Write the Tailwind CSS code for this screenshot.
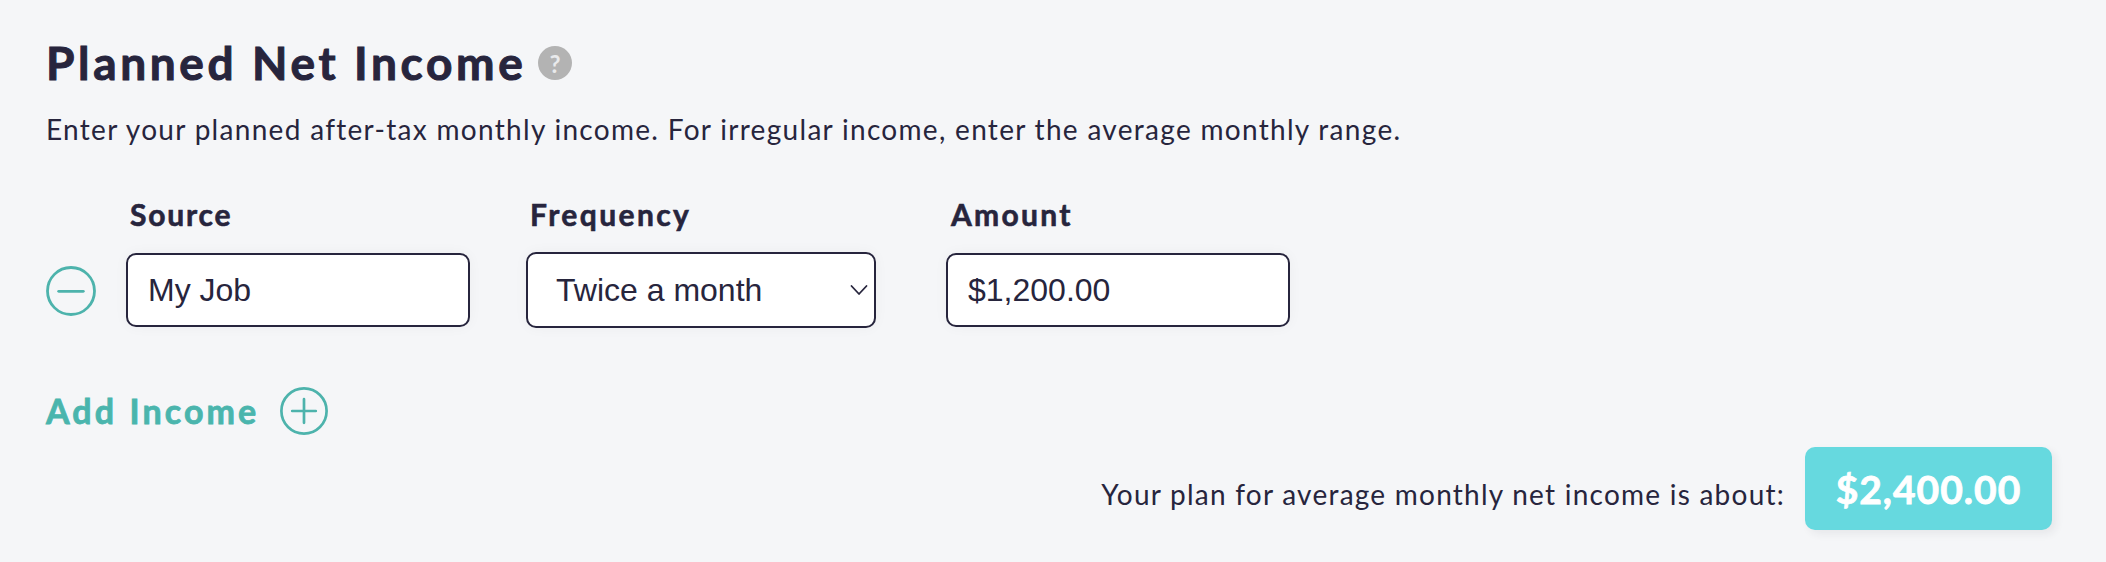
<!DOCTYPE html>
<html lang="en">
  <head>
    <meta charset="UTF-8" />
    <meta name="viewport" content="width=device-width, initial-scale=1.0" />
    <script src="https://cdn.jsdelivr.net/npm/@tailwindcss/browser@4"></script>
    <title>Planned Net Income</title>
  </head>
  <body class="bg-[#f5f6f8] text-[#27253d] font-['Lato',sans-serif]">
    <div class="h-[562px] pt-[39px] pl-[46px] pr-[54px] overflow-hidden">
      <div class="flex items-start">
        <h1 class="text-[46px] leading-[48px] font-bold tracking-[3.65px] [-webkit-text-stroke:1px_#27253d] whitespace-nowrap w-[492px]">Planned Net Income</h1>
        <button type="button" class="mt-[7px] size-[34px] rounded-full bg-[#b3b3b3] text-[#e9eaec] text-[24px] leading-[33px] font-bold text-center">?</button>
      </div>
      <p class="mt-6 text-[28px] leading-9 tracking-[1.3px] whitespace-nowrap">
        Enter your planned after-tax monthly income. For irregular income, enter the average monthly range.
      </p>

      <!-- Income row -->
      <div class="mt-[49px] flex items-start">
        <button type="button" class="mt-[70px] size-[50px]" aria-label="Remove income">
          <svg viewBox="0 0 50 50" class="size-full" fill="none" stroke="#4db3ac" stroke-width="2.8" stroke-linecap="round">
            <circle cx="25" cy="25" r="23.5" />
            <path d="M12.7 25.3H37.3" />
          </svg>
        </button>
        <div class="ml-[30px] w-[344px] flex flex-col">
          <label for="source" class="pl-1 mb-[21px] text-[30px] leading-9 font-bold tracking-[1.8px] [-webkit-text-stroke:0.6px_#27253d]">Source</label>
          <input id="source" type="text" value="My Job" class="h-[74px] rounded-[10px] border-2 border-[#27253d] bg-white px-5 text-[32px] font-['Liberation_Sans',sans-serif] shadow-[0_0_14px_rgba(39,37,61,0.04)]" />
        </div>
        <div class="ml-[56px] w-[350px] flex flex-col">
          <label for="frequency" class="pl-1 mb-5 text-[30px] leading-9 font-bold tracking-[2.4px] [-webkit-text-stroke:0.6px_#27253d]">Frequency</label>
          <div class="relative">
            <select id="frequency" class="appearance-none w-full h-[76px] rounded-[10px] border-2 border-[#27253d] bg-white px-[28px] text-[32px] font-['Liberation_Sans',sans-serif] shadow-[0_0_14px_rgba(39,37,61,0.04)]">
              <option>Twice a month</option>
            </select>
            <svg viewBox="0 0 18 12" class="absolute right-2 top-[32px] w-[18px] h-3" fill="none" stroke="#27253d" stroke-width="1.8" stroke-linecap="round" stroke-linejoin="round">
              <path d="M1.5 2L9 10L16.5 2" />
            </svg>
          </div>
        </div>
        <div class="ml-[70px] w-[344px] flex flex-col">
          <label for="amount" class="pl-[5px] mb-[21px] text-[30px] leading-9 font-bold tracking-[2.3px] [-webkit-text-stroke:0.6px_#27253d]">Amount</label>
          <input id="amount" type="text" value="$1,200.00" class="h-[74px] rounded-[10px] border-2 border-[#27253d] bg-white px-5 text-[32px] font-['Liberation_Sans',sans-serif] shadow-[0_0_14px_rgba(39,37,61,0.04)]" />
        </div>
      </div>

      <button type="button" class="mt-[59px] h-12 flex items-center text-[#4ab5ad]">
        <span class="w-[234px] text-left text-[34px] leading-[48px] font-bold tracking-[3.1px] [word-spacing:1px] [-webkit-text-stroke:0.8px_#4ab5ad] whitespace-nowrap">Add Income</span>
        <svg viewBox="0 0 48 48" class="size-12" fill="none" stroke="#4db3ac" stroke-width="2.7" stroke-linecap="round">
          <circle cx="24" cy="24" r="22.6" />
          <path d="M12.2 24H35.8M24 12.2V35.8" />
        </svg>
      </button>

      <!-- Monthly total -->
      <div class="mt-3 flex justify-end">
        <p class="mt-[29px] mr-[20px] text-[28px] leading-9 tracking-[1.24px] whitespace-nowrap">Your plan for average monthly net income is about:</p>
        <div class="w-[247px] h-[83px] rounded-[10px] bg-[#66d9df] text-white text-[39px] leading-[84px] font-bold tracking-[1px] [-webkit-text-stroke:0.8px_white] text-center shadow-[4px_4px_8px_rgba(39,37,61,0.07)]">$2,400.00</div>
      </div>
    </div>
  </body>
</html>
